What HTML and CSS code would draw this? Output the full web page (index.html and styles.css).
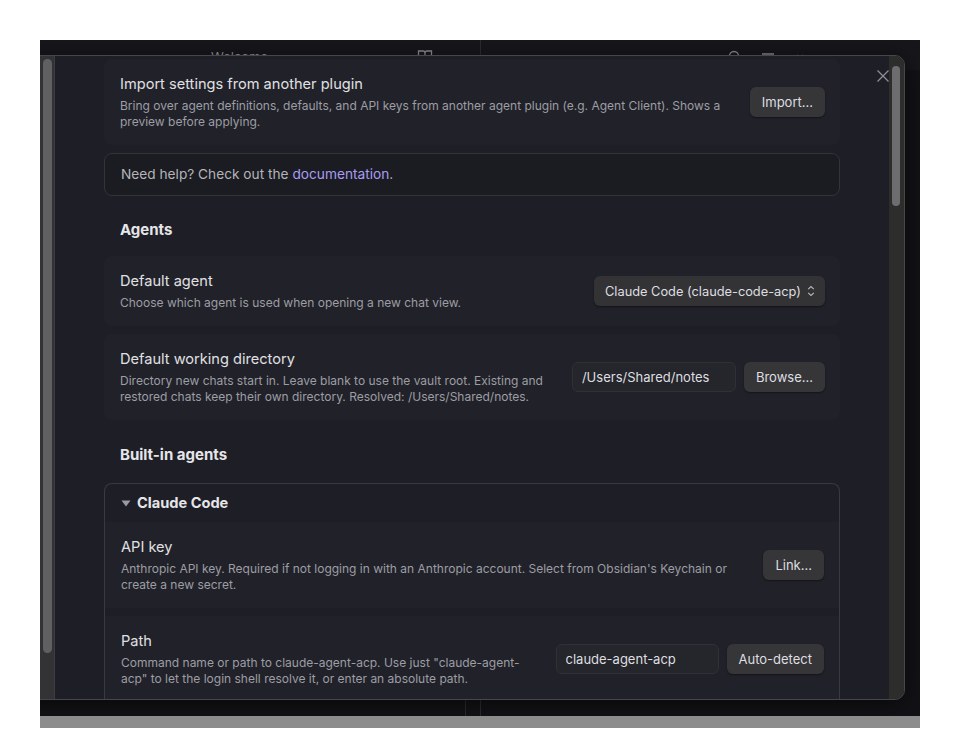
FILE: index.html
```html
<!DOCTYPE html>
<html>
<head>
  <meta charset="utf-8">
  <link rel="stylesheet" href="styles.css">
</head>
<body>
  <div class="window">
    <div class="workspace">
      <div class="pane pane-left">
        <div class="pane-header">
          <span class="tab-title">Welcome</span>
          <svg class="header-icon book" width="16" height="16" viewBox="0 0 16 16"><path d="M1.5 3h4.5a2 2 0 0 1 2 2v9a1.5 1.5 0 0 0-1.5-1.5h-5zM14.5 3h-4.5a2 2 0 0 0-2 2v9a1.5 1.5 0 0 1 1.5-1.5h5z" fill="none" stroke="#8a8a8f" stroke-width="1.3"/></svg>
        </div>
        <div class="pane-strip"></div>
      </div>
      <div class="pane pane-right">
        <div class="pane-header right-icons">
          <svg width="16" height="16" viewBox="0 0 16 16"><circle cx="7" cy="7" r="4.5" fill="none" stroke="#8a8a8f" stroke-width="1.3"/></svg>
          <svg width="16" height="16" viewBox="0 0 16 16"><path d="M2 5h12M2 8h12M2 11h12" stroke="#8a8a8f" stroke-width="1.3"/></svg>
          <svg width="16" height="16" viewBox="0 0 16 16"><path d="M4 6l6 6M10 6l-6 6" stroke="#8a8a8f" stroke-width="1.3"/></svg>
        </div>
      </div>
    </div>

    <div class="modal">
      <div class="modal-sidebar">
        <div class="sidebar-track"><div class="sidebar-thumb"></div></div>
      </div>

      <div class="modal-content">
        <div class="setting-item">
          <div class="setting-info">
            <div class="setting-name">Import settings from another plugin</div>
            <div class="setting-desc">Bring over agent definitions, defaults, and API keys from another agent plugin (e.g. Agent Client). Shows a preview before applying.</div>
          </div>
          <div class="setting-control">
            <button class="btn">Import...</button>
          </div>
        </div>

        <div class="help-box">Need help? Check out the <a href="#">documentation</a>.</div>

        <div class="setting-heading">Agents</div>

        <div class="setting-item">
          <div class="setting-info">
            <div class="setting-name">Default agent</div>
            <div class="setting-desc">Choose which agent is used when opening a new chat view.</div>
          </div>
          <div class="setting-control">
            <div class="dropdown">
              <span>Claude Code (claude-code-acp)</span>
              <svg class="chevrons" width="8" height="12" viewBox="0 0 8 12"><path d="M1.2 4.2L4 1.5l2.8 2.7M1.2 7.8L4 10.5l2.8-2.7" fill="none" stroke="#b8b8bc" stroke-width="1.1"/></svg>
            </div>
          </div>
        </div>

        <div class="setting-item">
          <div class="setting-info">
            <div class="setting-name">Default working directory</div>
            <div class="setting-desc">Directory new chats start in. Leave blank to use the vault root. Existing and restored chats keep their own directory. Resolved: /Users/Shared/notes.</div>
          </div>
          <div class="setting-control">
            <input class="text-input" type="text" value="/Users/Shared/notes">
            <button class="btn">Browse...</button>
          </div>
        </div>

        <div class="setting-heading built-in">Built-in agents</div>

        <div class="agent-box">
          <div class="agent-summary">
            <svg class="caret" width="10" height="10" viewBox="0 0 10 10"><path d="M0.5 2.5h9L5 8.5z" fill="#9a9aa0"/></svg>
            Claude Code
          </div>

          <div class="setting-item inner">
            <div class="setting-info">
              <div class="setting-name">API key</div>
              <div class="setting-desc">Anthropic API key. Required if not logging in with an Anthropic account. Select from Obsidian's Keychain or create a new secret.</div>
            </div>
            <div class="setting-control">
              <button class="btn">Link...</button>
            </div>
          </div>

          <div class="setting-item inner">
            <div class="setting-info">
              <div class="setting-name">Path</div>
              <div class="setting-desc">Command name or path to claude-agent-acp. Use just "claude-agent-acp" to let the login shell resolve it, or enter an absolute path.</div>
            </div>
            <div class="setting-control">
              <input class="text-input path" type="text" value="claude-agent-acp">
              <button class="btn">Auto-detect</button>
            </div>
          </div>
        </div>
      </div>

      <div class="modal-scrollbar"><div class="modal-thumb"></div></div>

      <svg class="modal-close" width="14" height="14" viewBox="0 0 14 14"><path d="M1.5 1.5l11 11M12.5 1.5l-11 11" stroke="#8d8d92" stroke-width="1.3"/></svg>
    </div>
  </div>
  <div class="statusbar"></div>
</body>
</html>
```

FILE: styles.css
```css
/* Page */

html, body {
  margin: 0;
  background: #fff;
  font-family: "Inter", "Liberation Sans", sans-serif;
}

.window {
  margin: 40px 0 0 40px;
  width: 880px;
  height: 676px;
  background: #121216;
  position: relative;
  overflow: hidden;
}

.statusbar {
  margin-left: 40px;
  width: 880px;
  height: 12px;
  background: #8c8c8c;
}

/* Workspace behind the modal */

.workspace {
  display: flex;
  height: 100%;
}

.pane {
  height: 100%;
  display: flex;
  flex-direction: column;
}

.pane-left {
  width: 440px;
  border-right: 1px solid #2a2a30;
}

.pane-right {
  flex: 1;
}

.pane-header {
  height: 30px;
  display: flex;
  align-items: flex-start;
  background: #16161b;
}

.tab-title {
  margin-left: 171px;
  margin-top: 9px;
  font-size: 13px;
  line-height: 16px;
  color: #8a8a8f;
}

.header-icon.book {
  margin-left: 149px;
  margin-top: 8px;
}

.pane-strip {
  flex: 1;
  margin-right: 14px;
  border-right: 1px solid #2a2a2e;
}

.right-icons {
  padding-left: 246px;
  gap: 17px;
}

.right-icons svg {
  margin-top: 9px;
}

/* Modal */

.modal {
  position: absolute;
  top: 15px;
  right: 15px;
  bottom: 16px;
  left: -186px;
  display: flex;
  background: #1e1f26;
  border: 1px solid #46474e;
  border-radius: 10px;
  overflow: hidden;
  box-shadow: 0 4px 20px rgba(0, 0, 0, 0.5);
}

.modal-sidebar {
  width: 199px;
  flex-shrink: 0;
  background: #1a1a1e;
  border-right: 1px solid #3c3d44;
  display: flex;
  justify-content: flex-end;
}

.sidebar-track {
  width: 14px;
  background: #333335;
  padding: 3px 2px 0 3px;
  box-sizing: border-box;
}

.sidebar-thumb {
  width: 9px;
  height: 594px;
  border-radius: 5px;
  background: #606063;
}

.modal-content {
  flex: 1;
  overflow: hidden;
  padding: 3px 49px 0 49px;
}

.modal-scrollbar {
  width: 15px;
  flex-shrink: 0;
  background: #2d2e2b;
  padding: 10px 4px 0 3px;
  box-sizing: border-box;
}

.modal-thumb {
  width: 8px;
  height: 140px;
  border-radius: 4px;
  background: #6d6d6f;
}

.modal-close {
  position: absolute;
  top: 13px;
  right: 14px;
}

/* Setting items */

.setting-item {
  display: flex;
  align-items: center;
  padding: 15px 15px 15px 16px;
  margin-bottom: 8px;
  background: #212229;
  border-radius: 8px;
}

.setting-info {
  flex: 1;
  margin-right: 20px;
}

.setting-name {
  font-size: 14.6px;
  line-height: 20px;
  margin-bottom: 4px;
  color: #e0e0e3;
}

.setting-desc {
  font-size: 12px;
  line-height: 16px;
  color: #9d9da4;
}

.setting-control {
  display: flex;
  align-items: center;
  gap: 8px;
  flex-shrink: 0;
}

.setting-heading {
  padding: 24px 16px 16px;
  font-size: 15px;
  line-height: 20px;
  font-weight: 700;
  color: #e6e6e9;
}

.setting-heading.built-in {
  padding: 17px 16px 18px;
}

.help-box {
  padding: 10px 16px;
  font-size: 13.7px;
  line-height: 21px;
  color: #b4b4b9;
  background: #1b1c22;
  border: 1px solid #33343b;
  border-radius: 8px;
}

.help-box a {
  color: #a99cf2;
  text-decoration: none;
}

/* Controls */

.btn {
  height: 30px;
  padding: 0 12px;
  font-family: inherit;
  font-size: 13px;
  color: #dedee0;
  background: #363639;
  border: none;
  border-radius: 6px;
  box-shadow: 0 1px 2px rgba(0, 0, 0, 0.45);
}

.dropdown {
  height: 30px;
  width: 231px;
  box-sizing: border-box;
  padding: 0 10px 0 11px;
  display: flex;
  align-items: center;
  justify-content: space-between;
  font-size: 12.8px;
  color: #dedee0;
  background: #333336;
  border-radius: 6px;
  box-shadow: 0 1px 2px rgba(0, 0, 0, 0.45);
}

.text-input {
  height: 30px;
  width: 164px;
  box-sizing: border-box;
  padding: 0 9px;
  font-family: inherit;
  font-size: 13px;
  color: #dedee0;
  background: #25262b;
  border: 1px solid #303137;
  border-radius: 6px;
  outline: none;
}

.text-input.path {
  width: 163px;
}

/* Built-in agent box */

.agent-box {
  border: 1px solid #383941;
  border-bottom: none;
  border-radius: 8px 8px 0 0;
}

.agent-summary {
  display: flex;
  align-items: center;
  gap: 6px;
  padding: 9px 16px;
  font-size: 14.6px;
  line-height: 20px;
  font-weight: 700;
  color: #e6e6e9;
}

.setting-item.inner {
  border-radius: 0;
  padding-right: 15px;
}
```
